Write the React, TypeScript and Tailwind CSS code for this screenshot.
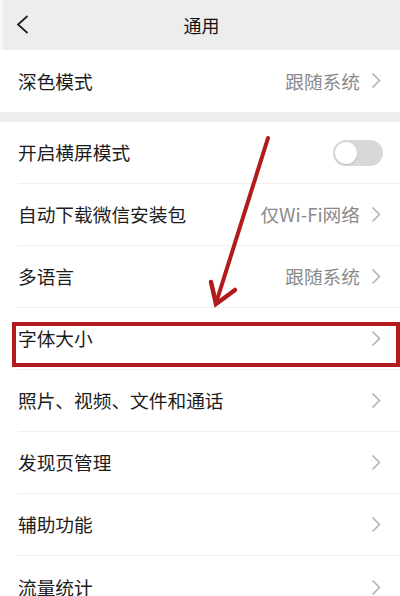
type Row = { label: string; value?: string; toggle?: boolean };

const groupTwo: Row[] = [
  { label: '开启横屏模式', toggle: true },
  { label: '自动下载微信安装包', value: '仅Wi-Fi网络' },
  { label: '多语言', value: '跟随系统' },
  { label: '字体大小' },
  { label: '照片、视频、文件和通话' },
  { label: '发现页管理' },
  { label: '辅助功能' },
  { label: '流量统计' },
];

function Chevron() {
  return (
    <svg width="10" height="17" viewBox="0 0 10 17" className="shrink-0">
      <polyline points="1.5,1.5 8.5,8.5 1.5,15.5" fill="none" stroke="#b2b2b2" strokeWidth="1.6" />
    </svg>
  );
}

function SettingRow({ row, last }: { row: Row; last?: boolean }) {
  return (
    <div className="pl-[18px] bg-white">
      <div
        className={`h-[62px] flex items-center pr-[19px] ${last ? '' : 'border-b border-[#efefef]'}`}
      >
        <span className="flex-1 text-[18.7px] text-[#1c1c1c]">{row.label}</span>
        {row.toggle ? (
          <div className="w-[50px] h-[26px] rounded-full bg-[#d8d8d8] flex items-center px-[2px] mr-[-2px]">
            <div className="w-[22px] h-[22px] rounded-full bg-white shadow-sm" />
          </div>
        ) : (
          <div className="flex items-center gap-[11px]">
            {row.value && <span className="text-[18.7px] text-[#8a8a8a]">{row.value}</span>}
            <Chevron />
          </div>
        )}
      </div>
    </div>
  );
}

export default function App() {
  return (
    <div
      className="relative w-[400px] h-[596px] overflow-hidden bg-[#ededed]"
      style={{ fontFamily: '"Noto Sans CJK SC", "Noto Sans", sans-serif' }}
    >
      <div className="h-[50px] flex items-center relative border-l-[3px] border-[#f6f6f6]">
        <svg width="14" height="19" viewBox="0 0 14 19" className="ml-[13px] mt-[-1px]">
          <polyline points="11.5,1 2,9.5 11.5,18" fill="none" stroke="#1c1c1c" strokeWidth="1.7" />
        </svg>
        <span className="absolute left-0 right-0 text-center text-[18px] text-[#111]">通用</span>
      </div>

      <SettingRow row={{ label: '深色模式', value: '跟随系统' }} last />

      <div className="h-[10px]" />

      {groupTwo.map((row, i) => (
        <SettingRow key={i} row={row} last={i === groupTwo.length - 1} />
      ))}

      {/* annotation: red box round 字体大小 */}
      <div className="absolute left-[12px] top-[322px] w-[388px] h-[45px] border-[4px] border-[#b31a1c] pointer-events-none" />

      {/* annotation: arrow */}
      <svg
        className="absolute inset-0 pointer-events-none"
        width="400"
        height="596"
        viewBox="0 0 400 596"
      >
        <line x1="268" y1="138" x2="217" y2="300" stroke="#b31a1c" strokeWidth="4" strokeLinecap="round" />
        <polyline
          points="211,282 216,304 235,290"
          fill="none"
          stroke="#b31a1c"
          strokeWidth="4.5"
          strokeLinejoin="miter"
          strokeLinecap="round"
        />
      </svg>
    </div>
  );
}
